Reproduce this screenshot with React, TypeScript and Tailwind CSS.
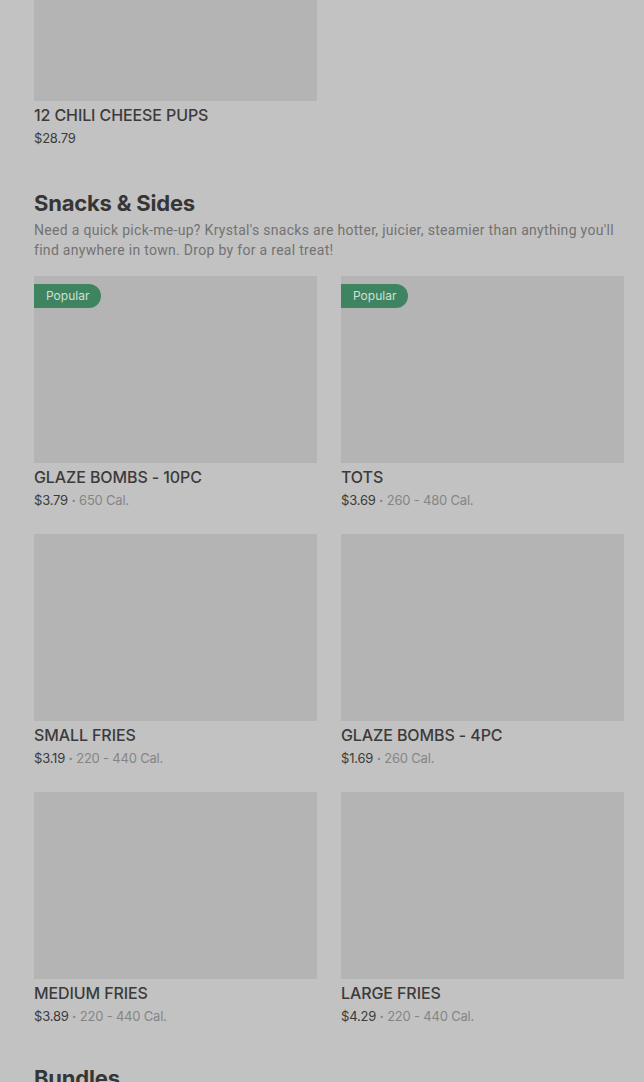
import React from 'react';

interface Item {
  name: string;
  price: string;
  cal?: string;
  popular?: boolean;
}

const snacks: Item[] = [
  { name: 'GLAZE BOMBS - 10PC', price: '$3.79', cal: '650 Cal.', popular: true },
  { name: 'TOTS', price: '$3.69', cal: '260 - 480 Cal.', popular: true },
  { name: 'SMALL FRIES', price: '$3.19', cal: '220 - 440 Cal.' },
  { name: 'GLAZE BOMBS - 4PC', price: '$1.69', cal: '260 Cal.' },
  { name: 'MEDIUM FRIES', price: '$3.89', cal: '220 - 440 Cal.' },
  { name: 'LARGE FRIES', price: '$4.29', cal: '220 - 440 Cal.' },
];

function MenuCard({ item, imageClass = 'h-[187px]' }: { item: Item; imageClass?: string }) {
  return (
    <div className="flex flex-col">
      <div className={`relative w-full bg-[#b4b4b4] ${imageClass}`}>
        {item.popular && (
          <span className="absolute left-0 top-2 flex h-6 items-center rounded-r-full bg-[#3f8461] px-3 text-[12px] text-[#cfe0d5]">
            Popular
          </span>
        )}
      </div>
      <div className="mt-1 text-[16px] leading-5 font-medium tracking-[-0.1px] text-[#3b3b3b]">{item.name}</div>
      <div className="mt-[3px] text-[13px] leading-5 tracking-[-0.2px] text-[#3b3b3b]">
        {item.price}
        {item.cal && (
          <span className="text-[#858585]">
            {' '}
            <span className="font-bold">·</span> {item.cal}
          </span>
        )}
      </div>
    </div>
  );
}

export default function App() {
  return (
    <div className="min-h-[1082px] overflow-hidden bg-[#c2c2c2] pl-[34px] pr-5 font-['Inter',sans-serif]">
      {/* Previous section tail */}
      <div className="w-[283px]">
        <MenuCard item={{ name: '12 CHILI CHEESE PUPS', price: '$28.79' }} imageClass="h-[101px]" />
      </div>

      {/* Snacks & Sides */}
      <section className="mt-[41px]">
        <h2 className="text-[22px] leading-7 font-bold tracking-[-0.2px] text-[#363636]">Snacks &amp; Sides</h2>
        <p className="mt-[3px] font-['Roboto',sans-serif] text-[14px] leading-5 tracking-[0.3px] text-[#727272]">
          Need a quick pick-me-up? Krystal's snacks are hotter, juicier, steamier than anything you'll find anywhere in
          town. Drop by for a real treat!
        </p>
        <div className="mt-4 grid grid-cols-2 gap-x-6 gap-y-6">
          {snacks.map((s) => (
            <MenuCard key={s.name} item={s} />
          ))}
        </div>
      </section>

      {/* Bundles */}
      <section className="mt-[38px]">
        <h2 className="text-[22px] leading-7 font-bold tracking-[-0.2px] text-[#363636]">Bundles</h2>
      </section>
    </div>
  );
}
